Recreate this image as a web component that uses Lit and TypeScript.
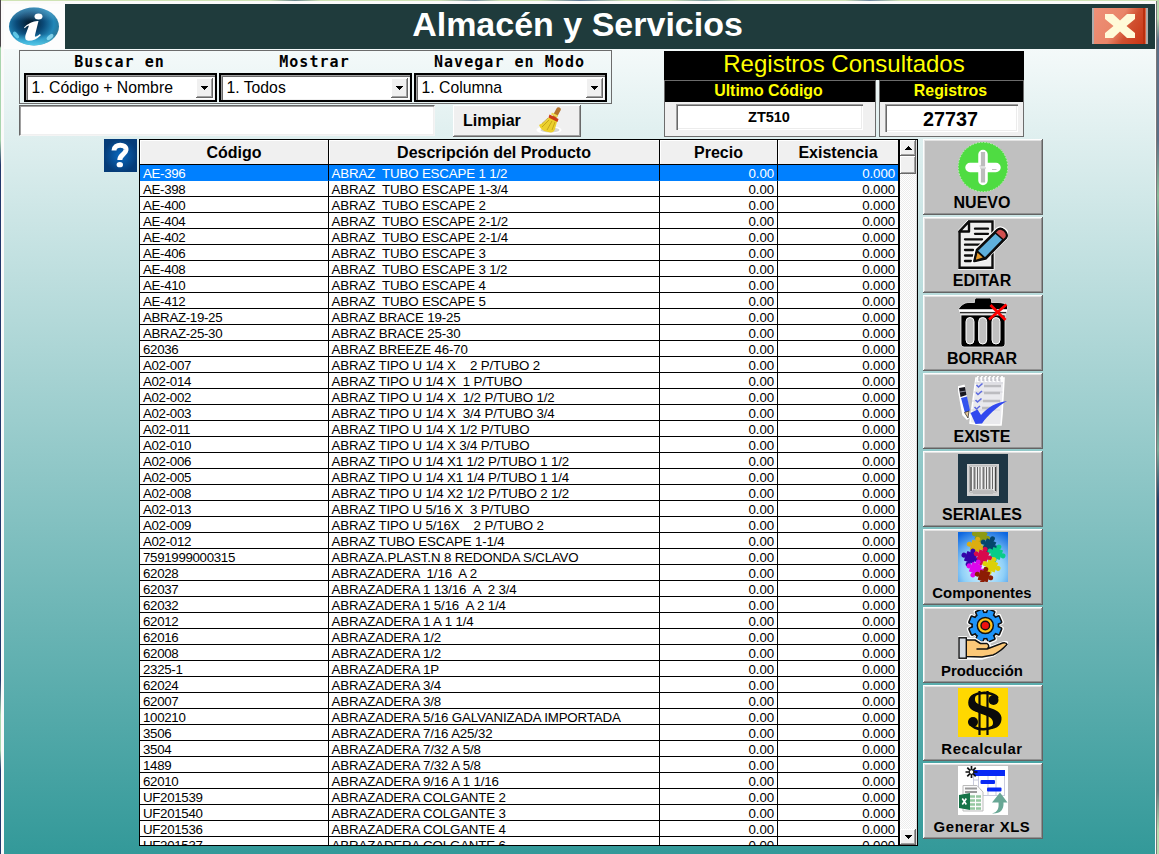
import { LitElement, html, svg, css } from "lit";
import { customElement, property } from "lit/decorators.js";

type Row = [string, string];

const ROWS: Row[] = [
  ["AE-396", "ABRAZ  TUBO ESCAPE 1 1/2"],
  ["AE-398", "ABRAZ  TUBO ESCAPE 1-3/4"],
  ["AE-400", "ABRAZ  TUBO ESCAPE 2"],
  ["AE-404", "ABRAZ  TUBO ESCAPE 2-1/2"],
  ["AE-402", "ABRAZ  TUBO ESCAPE 2-1/4"],
  ["AE-406", "ABRAZ  TUBO ESCAPE 3"],
  ["AE-408", "ABRAZ  TUBO ESCAPE 3 1/2"],
  ["AE-410", "ABRAZ  TUBO ESCAPE 4"],
  ["AE-412", "ABRAZ  TUBO ESCAPE 5"],
  ["ABRAZ-19-25", "ABRAZ BRACE 19-25"],
  ["ABRAZ-25-30", "ABRAZ BRACE 25-30"],
  ["62036", "ABRAZ BREEZE 46-70"],
  ["A02-007", "ABRAZ TIPO U 1/4 X    2 P/TUBO 2"],
  ["A02-014", "ABRAZ TIPO U 1/4 X  1 P/TUBO"],
  ["A02-002", "ABRAZ TIPO U 1/4 X  1/2 P/TUBO 1/2"],
  ["A02-003", "ABRAZ TIPO U 1/4 X  3/4 P/TUBO 3/4"],
  ["A02-011", "ABRAZ TIPO U 1/4 X 1/2 P/TUBO"],
  ["A02-010", "ABRAZ TIPO U 1/4 X 3/4 P/TUBO"],
  ["A02-006", "ABRAZ TIPO U 1/4 X1 1/2 P/TUBO 1 1/2"],
  ["A02-005", "ABRAZ TIPO U 1/4 X1 1/4 P/TUBO 1 1/4"],
  ["A02-008", "ABRAZ TIPO U 1/4 X2 1/2 P/TUBO 2 1/2"],
  ["A02-013", "ABRAZ TIPO U 5/16 X  3 P/TUBO"],
  ["A02-009", "ABRAZ TIPO U 5/16X    2 P/TUBO 2"],
  ["A02-012", "ABRAZ TUBO ESCAPE 1-1/4"],
  ["7591999000315", "ABRAZA.PLAST.N 8 REDONDA S/CLAVO"],
  ["62028", "ABRAZADERA  1/16  A 2"],
  ["62037", "ABRAZADERA 1 13/16  A  2 3/4"],
  ["62032", "ABRAZADERA 1 5/16  A 2 1/4"],
  ["62012", "ABRAZADERA 1 A 1 1/4"],
  ["62016", "ABRAZADERA 1/2"],
  ["62008", "ABRAZADERA 1/2"],
  ["2325-1", "ABRAZADERA 1P"],
  ["62024", "ABRAZADERA 3/4"],
  ["62007", "ABRAZADERA 3/8"],
  ["100210", "ABRAZADERA 5/16 GALVANIZADA IMPORTADA"],
  ["3506", "ABRAZADERA 7/16 A25/32"],
  ["3504", "ABRAZADERA 7/32 A 5/8"],
  ["1489", "ABRAZADERA 7/32 A 5/8"],
  ["62010", "ABRAZADERA 9/16 A 1 1/16"],
  ["UF201539", "ABRAZADERA COLGANTE 2"],
  ["UF201540", "ABRAZADERA COLGANTE 3"],
  ["UF201536", "ABRAZADERA COLGANTE 4"],
  ["UF201537", "ABRAZADERA COLGANTE 6"],
];

const puzzle = (x: number, y: number, c: string, r: number) => svg`
  <g transform="translate(${x} ${y}) rotate(${r}) scale(1.12)" fill=${c}>
    <rect x="-4.6" y="-4.6" width="9.2" height="9.2"/>
    <circle cx="0" cy="-6.2" r="2.2"/><circle cx="0" cy="6.2" r="2.2"/>
    <circle cx="-6.2" cy="0" r="2.2"/><circle cx="6.2" cy="0" r="2.2"/>
  </g>`;

const ICONS: Record<string, unknown> = {
  nuevo: svg`
    <circle cx="25" cy="25" r="25" fill="#4fdc42"/>
    <circle cx="25" cy="25" r="24.7" fill="none" stroke="#dff5dc" stroke-width=".8" stroke-dasharray="1.5 1.5"/>
    <path d="M25 12.500v26M12 25.500h26" stroke="#fff" stroke-width="9.500" stroke-linecap="round"/>
    <path d="M25 10v14.500M25 26.500v14" stroke="#bcbcbc" stroke-width="4.200"/>
    <path d="M23 24h-1.500M22 26h6M34 27.500h4.500" stroke="#c0c0c0" stroke-width="1"/>`,
  editar: svg`
    <path d="M11 .8H35V48.200H.900V11.500Z" fill="#fff" stroke="#fff" stroke-width="3"/>
    <path d="M11 1.500H34.500V47.700H1.500V11.500Z" fill="#f0f0f0" stroke="#0c0c0c" stroke-width="2.400"/>
    <path d="M11 1.500V11.500H1.500Z" fill="#f0f0f0" stroke="#0c0c0c" stroke-width="2.400" stroke-linejoin="round"/>
    <path d="M17 8.700H30M17 13.800H30M7 19.300H24M7 24.700H22M7 30H15M7 35.500H15M7 41H13" stroke="#0c0c0c" stroke-width="2.300" stroke-linecap="round"/>
    <path d="M15.800 41.200l2.500-11L39.500 9.500c4-4 12 3 8.500 8L27 38.800Z" fill="#fff" stroke="#fff" stroke-width="4"/>
    <path d="M16.500 41l2.500-11L39.500 10c4-3.500 11 3 8.500 7.500L27.500 38.500Z" fill="#5fb0dc" stroke="#0c0c0c" stroke-width="2.600" stroke-linejoin="round"/>
    <path d="M39.500 10c4-3.500 11 3 8.500 7.500l-2.500 2.500-8.500-7.500Z" fill="#d05050" stroke="#0c0c0c" stroke-width="1.600"/>
    <path d="M16.500 41l2.500-10 7.500 6.800Z" fill="#e59a2c" stroke="#0c0c0c" stroke-width="1.800"/>`,
  borrar: svg`
    <path d="M3 17H47V46Q47 49 44 49H6Q3 49 3 46Z" fill="#000" stroke="#e8e8e8" stroke-width=".8"/>
    <path d="M0 11.500C3 7.500 6 4.500 11 4.500H16.500V2Q16.500 0 18.500 0H31.500Q33.500 0 33.500 2V4.500H40C44 4.500 47 5.500 49.500 7.500V11.500Z" fill="#000" stroke="#e8e8e8" stroke-width=".8"/>
    <path d="M1 12.800H49" stroke="#fff" stroke-width="1.800"/><path d="M2 14.800H48" stroke="#000" stroke-width="1.200"/>
    <path d="M2 16H48" stroke="#fff" stroke-width="1.200"/>
    <g fill="#c0c0c0" stroke="#fff" stroke-width="1"><rect x="8" y="19.500" width="8" height="26.500" rx="4"/><rect x="20.700" y="19.500" width="8" height="26.500" rx="4"/><rect x="34" y="19.500" width="8" height="26.500" rx="4"/></g>
    <path d="M32.500 7L47.500 22M48.500 6.500L31 21.500" stroke="#f00" stroke-width="2.800" fill="none"/>`,
  existe: svg`
    <path d="M18 2H46L44 38 43 49H24L12 47Z" fill="#e9e9ed" stroke="#fff" stroke-width="1.600"/>
    <path d="M17 7h28M15.500 16h29M14 25h29M13 34h29" stroke="#cfcfd8" stroke-width=".8"/>
    <path d="M20 0v6M24 0v6M28 0v6M32 0v6M36 0v6M40 0v6M44 0v6" stroke="#fff" stroke-width="1.800"/>
    <path d="M21 1v4M25 1v4M29 1v4M33 1v4M37 1v4M41 1v4" stroke="#9a9aa5" stroke-width=".9"/>
    <path d="M26 10h17M26 17h16M25 25h17M24 32h12" stroke="#bcbcc0" stroke-width="2.500"/>
    <path d="M18.500 9l2 2 4-3.500M18 16.500l2 2 4-3.500M17.500 24l2 2 4-3.500M16.500 31l2 2 3.500-3" fill="none" stroke="#5d6be0" stroke-width="1.600"/>
    <path d="M0 11L6 9.500 12 41 9 43 5 39Z" fill="#fff" stroke="#fff" stroke-width="1.500"/>
    <path d="M1 12l6-1 1.500 8-6 2Z" fill="#181820"/><path d="M2 16l6-1" stroke="#889" stroke-width="1"/>
    <path d="M3 22l6-1.500 3 14-5 2.500Z" fill="#3454ee"/><path d="M6.500 36.500l4.500-1.500-1 7Z" fill="#e8c89a" stroke="#222" stroke-width=".7"/>
    <path d="M12.500 37l7-3.500 3.500 5.500C30 31 38 26.500 49 25 39 31 30 39 24 47.500L17.500 48Z" fill="#3148ef"/>`,
  seriales: svg`
    <rect width="50" height="49" fill="#1e3644"/><rect x="9" y="10" width="32" height="32" fill="#d2d2d2"/>
    <path d="M11.500 12H38.500V38H35V36H15V38H11.500Z" fill="#f4f4f4" stroke="#aaa" stroke-width="1"/>
    <path d="M13 13V37M37.500 13V37" stroke="#444" stroke-width="1.400"/>
    <path d="M16.500 13V35M25.500 13V35M31.500 13V35" stroke="#777" stroke-width="2"/>
    <path d="M19.500 13V35M22 13V35M28.500 13V35M34.500 13V35" stroke="#666" stroke-width="1.100"/>
    <path d="M15 38.500H35" stroke="#bbb" stroke-width="3"/>`,
  componentes: svg`
    <defs><radialGradient id="sky" cx=".5" cy=".75" r=".85"><stop offset="0" stop-color="#eafaff"/><stop offset=".5" stop-color="#8fd0f8"/><stop offset="1" stop-color="#0c66e0"/></radialGradient></defs>
    <rect width="50" height="50" fill="url(#sky)"/>
    ${puzzle(23, 4, "#8c9a14", 20)}${puzzle(18, 14, "#dcae10", 15)}${puzzle(31.5, 13, "#04466c", 25)}
    ${puzzle(12.5, 25.5, "#3404a8", 20)}${puzzle(38.5, 21.5, "#08cc88", 20)}${puzzle(25, 24, "#d8084c", 18)}
    ${puzzle(17.5, 36.5, "#dc08ec", 22)}${puzzle(33.5, 34, "#dcd008", 20)}${puzzle(26, 44, "#8c1c04", 15)}`,
  produccion: svg`
    <g transform="translate(27.300 15.500)">
      <g fill="#fff">${[0, 45, 90, 135].map((a) => svg`<rect x="-5.500" y="-18.500" width="11" height="37" rx="2" transform="rotate(${a + 22})"/>`)}</g>
      <circle r="14" fill="#111"/>
      <g fill="#1e94f8" stroke="#111" stroke-width="1.600">${[0, 45, 90, 135].map((a) => svg`<rect x="-3.800" y="-16.500" width="7.600" height="33" rx="1" transform="rotate(${a + 22})"/>`)}</g>
      <circle r="12.400" fill="#1e94f8"/><circle r="8" fill="#ffc21c" stroke="#111" stroke-width="1.500"/><circle r="4.300" fill="#f01010" stroke="#111" stroke-width="1.400"/>
    </g>
    <path d="M8 29H17L23 32.500H30Q33 35 30 38L44 33Q49 31 49.500 34L36 45 24 48.500H1V27.500H8Z" fill="#fff" stroke="#fff" stroke-width="2.500"/>
    <path d="M8 30H17L22.500 33.500H29Q32.500 36 29 39H19 29L42 34Q48 31.500 49 34.500 42 42 35 45L24 47 8 46.500Z" fill="#fcc878" stroke="#111" stroke-width="1.500" stroke-linejoin="round"/>
    <rect x="1" y="27.800" width="7.300" height="20.400" fill="#d4dbe4" stroke="#111" stroke-width="1.400"/>`,
  recalcular: svg`
    <rect width="50" height="49" fill="#ffd800"/>
    <path d="M21.500 3V47M29.500 3V47" stroke="#0a0a0a" stroke-width="2.200"/>
    <circle cx="35.500" cy="12" r="5" fill="#0a0a0a"/><circle cx="15" cy="34" r="5" fill="#0a0a0a"/>
    <path d="M39.500 10C37 3.500 12 1.500 11.500 14.500 11 27.500 38 21 38.500 33 38.500 43 14 45 11.500 33" fill="none" stroke="#0a0a0a" stroke-width="2.600"/>
    <path d="M11.200 12C9 26 30 25 34 31.500 36 35 35 38 31 41.500 40 41 44 36 43.500 29.500 42.500 18.500 21 20 17.500 13.500 16 10 18 7 20 5.500 15 6 12 8 11.200 12Z" fill="#0a0a0a"/>`,
  xls: svg`
    <rect width="50" height="49" fill="#fff"/><path d="M15.500 9V29M20.500 9V30M30 9V30M38 9V30M46.500 9V30M15 29.500H47M15 14H20" stroke="#c9cbdc" stroke-width="1"/>
    <rect x="16" y="4" width="31" height="6" fill="#0829f5"/><rect x="22.500" y="14" width="14.500" height="4" rx="1" fill="#0829f5"/><rect x="29" y="21.500" width="14.500" height="4" rx="1" fill="#0829f5"/>
    <path d="M13.500 0V12M7.500 6H19.500M9.300 1.700L17.700 10.300M17.700 1.700L9.300 10.300" stroke="#111" stroke-width="1.700"/><circle cx="13.500" cy="6" r="2.300" fill="#fff" stroke="#111" stroke-width="1"/>
    <path d="M5 19.500H19L25 26V45H5Z" fill="#fafafa" stroke="#bbb" stroke-width="1"/>
    <path d="M7 22.500h12M7 26h12" stroke="#999" stroke-width="2"/><path d="M12 30.500h11M12 34.500h11M12 38.500h11M12 42.500h11" stroke="#95c8a0" stroke-width="2.600"/><path d="M17.500 29V44" stroke="#fff" stroke-width="1"/>
    <path d="M1 29L12 27V44L1 42Z" fill="#157347"/><path d="M4.300 32.500L8.300 38.500M8.300 32.500L4.300 38.500" stroke="#fff" stroke-width="1.600"/>
    <path d="M34 47.500C40 46 41 42 40.500 36.500H34L42 26.500 49.500 36.500H45.500C46 44 42 48 34 47.500Z" fill="#68a795"/>`,
};

@customElement("action-button")
class ActionButton extends LitElement {
  @property() label = "";
  @property() icon = "";
  @property({ type: Boolean }) spaced = false;
  static styles = css`
    :host { display: block; }
    .btn {
      width: 120px; height: 76px; box-sizing: border-box; padding: 3px 1px 0 0;
      border: 0; background: #c0c0c0; display: flex; flex-direction: column; align-items: center;
      box-shadow: inset -1px -1px #636363, inset 1px 1px #fdfdfd, inset -2px -2px #929292, inset 2px 2px #e2e2e2;
      font: bold 16px/18px "Liberation Sans", Arial, sans-serif; color: #000;
    }
    .small { font-size: 14.9px; }
    .spaced { letter-spacing: 0.6px; }
    .label { margin: 1.5px 1px 0 0; white-space: nowrap; }
    svg { display: block; width: 50px; height: 50px; flex: none; overflow: hidden; }
  `;
  render() {
    const small = this.label !== this.label.toUpperCase();
    return html`<button class="btn ${small ? "small" : ""} ${this.spaced ? "spaced" : ""}">
      <svg viewBox="0 0 50 50">${ICONS[this.icon]}</svg>
      <span class="label">${this.label}</span>
    </button>`;
  }
}

@customElement("combo-box")
class ComboBox extends LitElement {
  @property() label = "";
  @property() value = "";
  static styles = css`
    :host { display: block; width: 193px; }
    .caption {
      height: 22px; text-align: center; white-space: nowrap; padding-right: 2px;
      font: bold 15px/22px "DejaVu Sans Mono", monospace; letter-spacing: 1.05px; color: #000;
    }
    .box {
      box-sizing: border-box; height: 29px; border: 2px solid #000; background: #fff; display: flex;
      box-shadow: inset 1px 1px #a0a0a0, inset 2px 2px #696969, inset -1px -1px #f0f0f0; padding: 3px 2px 2px 5.5px;
      align-items: stretch;
    }
    .value { flex: 1; font: 15.75px/20px "Liberation Sans", Arial, sans-serif; color: #000; white-space: nowrap; }
    .drop {
      width: 17px; height: 20px; background: #f0f0f0; display: grid; place-items: center;
      box-shadow: inset -1px -1px #696969, inset 1px 1px #fff, inset -2px -2px #a0a0a0;
    }
  `;
  render() {
    return html`<div class="caption">${this.label}</div>
      <div class="box"><span class="value">${this.value}</span>
        <span class="drop"><svg width="7" height="4" viewBox="0 0 7 4" shape-rendering="crispEdges"><path d="M0 0H7L3.500 4Z"/></svg></span>
      </div>`;
  }
}

@customElement("app-root")
class AppRoot extends LitElement {
  static styles = css`
    :host { display: block; font-family: "Liberation Sans", Arial, sans-serif; color: #000; }
    .desktop {
      box-sizing: border-box; width: 1159px; height: 854px; overflow: hidden; padding: 1px 3px 0 1px;
      background:
        linear-gradient(to bottom, #4a4448 46px, #a9d5ae 48px, #a9d5ae 140px, #22386c 165px, #22386c 680px, #a9d5ae 715px, #a9d5ae 750px, #22386c 770px) left / 1px 100% no-repeat,
        linear-gradient(to bottom, #b8dcae 0, #b8dcae 18px, #5c7088 40px, #5c7088 140px, #8cbc9c 195px, #5a8c8c 260px, #4c6c7c 390px, #78ac9c 450px, #22406c 500px, #223050 640px, #607880 700px, #607880 790px, #b8dcae 830px) right / 2px 100% no-repeat,
        linear-gradient(to right, #cfe3b5 0, #cfe3b5 270px, #6f8a90 295px, #cfe3b5 320px, #cfe3b5 440px, #7a92a0 475px, #cfe3b5 500px, #cfe3b5 540px, #5f7a98 580px, #cfe3b5 625px, #cfe3b5 670px, #7a9aa0 705px, #cfe3b5 740px, #cfe3b5 845px, #7088a0 870px, #cfe3b5 900px);
    }
    .window {
      box-sizing: border-box; height: 853px; border: solid #fbfafa; border-width: 3px 1px 0 3px;
      box-shadow: 1px 0 #777;
      background: linear-gradient(to bottom, #fff, #339999);
    }
    .header { display: flex; height: 45px; background: #1f3b3c; align-items: center; }
    .logo { width: 61px; height: 45px; background: #fdfdfd; flex: none; }
    .logo svg, .help svg { display: block; }
    .title { flex: 1; text-align: center; margin: 0 2px 6px 0; font-size: 34px; line-height: 40px; font-weight: bold; color: #fff; }
    .close {
      flex: none; width: 56px; height: 36px; margin: 0 7px 1px 0; box-sizing: border-box;
      display: grid; place-items: center; border: solid #acacac; border-width: 0 2px;
      background: linear-gradient(to right, transparent 49px, #b83010 49px, #b83010 51px, #dc6848 51px), linear-gradient(120deg, #ee9078 0, #e98568 45%, #d05030 65%, #c83010);
    }
    .top { display: flex; height: 90px; box-sizing: border-box; padding: 1px 0 0 15px; align-items: flex-start; }
    .filters { width: 593px; margin-right: 52px; }
    .panel { box-sizing: border-box; height: 54px; border: 1px solid #6c6c6c; display: flex; gap: 2px; padding: 0 4px; }
    .searchrow { display: flex; gap: 18px; margin-top: 1px; }
    .search {
      box-sizing: border-box; width: 416px; height: 31px; background: #fff; border: solid; border-width: 1px;
      border-color: #686868 #f4f4f4 #f4f4f4 #686868; box-shadow: inset 1px 1px #a0a0a0, inset -1px -1px #f0f0f0;
    }
    .clear {
      width: 128px; height: 32px; box-sizing: border-box; border: 0; padding: 0 19px 0 10px; background: #f0f0f0; display: flex; align-items: center; justify-content: space-between;
      box-shadow: inset -1px -1px #696969, inset 1px 1px #fff, inset -2px -2px #a0a0a0;
      font: bold 16px/18px "Liberation Sans", Arial, sans-serif; color: #000;
    }
    .stats { width: 360px; margin-top: 1px; }
    .stats-title { height: 29px; background: #000; color: #ff0; font-size: 24px; line-height: 26px; text-align: center; }
    .stats-row { display: flex; gap: 3px; }
    .stat { box-sizing: border-box; height: 57px; border: 1px solid #6c6c6c; background: #f0f0f0; }
    .wide { width: 212px; }
    .narrow { width: 145px; }
    .stat-label { height: 21px; background: #000; color: #ff0; font-weight: bold; font-size: 15.9px; line-height: 19px; text-align: center; padding-right: 3px; }
    .narrow .stat-label { padding-right: 2px; }
    .stat-value {
      box-sizing: border-box; background: #fff; text-align: center; font-weight: bold;
      box-shadow: inset 1px 1px #a0a0a0, inset 2px 2px #696969, inset -1px -1px #fff, inset -2px -2px #ececec;
    }
    .wide .stat-value { width: 187px; height: 26px; margin: 2px 0 0 11px; font-size: 14.5px; line-height: 26px; padding-right: 1px; }
    .narrow .stat-value { width: 133px; height: 28px; margin: 2px 0 0 5px; font-size: 19.8px; line-height: 30px; padding-right: 2px; }
    .main { display: flex; padding-left: 100px; align-items: flex-start; }
    .help { width: 33px; height: 33px; margin-right: 2px; flex: none; }
    .table {
      box-sizing: border-box; width: 779px; height: 707px; border: 1px solid #000; background: #fff;
      display: flex; overflow: hidden; margin-right: 5px; flex: none;
    }
    .grid { width: 760px; overflow: hidden; flex: none; box-sizing: border-box; border-right: 2px solid #000; }
    .row { display: grid; grid-template-columns: 189px 331px 118px 120px; height: 16px; }
    .cell {
      box-sizing: border-box; border-right: 1px solid #000; border-bottom: 1px solid #000; padding: 0 3px;
      font-size: 13.3px; line-height: 17px; letter-spacing: -0.32px; white-space: pre; overflow: hidden; height: 16px;
    }
    .desc { letter-spacing: -0.15px; padding-left: 2.6px; }
    .cell:last-child { border-right: 0; }
    .num { text-align: right; letter-spacing: -0.1px; padding-right: 3px; }
    .selected .cell { background: #0080ff; color: #fff; border-bottom-color: #0080ff; }
    .head { height: 25px; }
    .head .cell { height: 25px; background: #f0f0f0; font-weight: bold; font-size: 16px; line-height: 25px; letter-spacing: 0; text-align: center; box-shadow: inset 1px 1px #fff; }
    .scroll {
      flex: 1; display: flex; flex-direction: column;
      background: conic-gradient(#fff 25%, #ececec 0 50%, #fff 0 75%, #ececec 0) 0 0 / 2px 2px; border-right: 1px solid #dcdcdc;
    }
    .sb {
      height: 16px; background: #f0f0f0; display: grid; place-items: center; flex: none;
      box-shadow: inset -1px -1px #696969, inset 1px 1px #fff, inset -2px -2px #a0a0a0;
    }
    .thumb { height: 18px; }
    .track { flex: 1; }
    .actions { display: flex; flex-direction: column; gap: 2px; }
  `;

  render() {
    return html`<div class="desktop"><div class="window">
      <div class="header">
        <div class="logo"><svg width="61" height="45" viewBox="0 0 61 45">
          <defs>
            <radialGradient id="orb" cx=".42" cy=".42" r=".6"><stop offset="0" stop-color="#031828"/><stop offset=".45" stop-color="#0a4a78"/><stop offset=".8" stop-color="#2287b8"/><stop offset="1" stop-color="#2c7898"/></radialGradient>
            <linearGradient id="glow" x1="0" y1="0" x2="0" y2="1"><stop offset="0" stop-color="#78b8d8" stop-opacity=".35"/><stop offset=".35" stop-color="#fff" stop-opacity="0"/><stop offset=".7" stop-color="#50d0f0" stop-opacity="0"/><stop offset="1" stop-color="#60e0ff" stop-opacity=".8"/></linearGradient>
          </defs>
          <ellipse cx="30" cy="22.500" rx="25" ry="19" fill="url(#orb)"/><ellipse cx="30" cy="22.500" rx="25" ry="19" fill="url(#glow)"/>
          <ellipse cx="12" cy="31" rx="4" ry="2" fill="#7ce6ff" opacity=".7" transform="rotate(50 12 31)"/><ellipse cx="46" cy="33" rx="4" ry="2" fill="#a4ecff" opacity=".7" transform="rotate(-40 46 33)"/>
          <ellipse cx="34.500" cy="12.500" rx="4" ry="3" fill="#fff"/>
          <path d="M20 23.500Q27 16.500 34.500 17L31 31Q30 35 36 30L36.800 31.200Q31 37 24.500 36.800 20 36.500 21.500 31L25 21.500Q23 21.500 20.700 24.300Z" fill="#fff"/>
        </svg></div>
        <div class="title">Almacén y Servicios</div>
        <div class="close"><svg width="32" height="26" viewBox="0 0 32 26"><path d="M1 1H9L16 7.500 23 1H31V6L22.500 13 31 20V25H23L16 18.500 9 25H1V20L9.500 13 1 6Z" fill="#fffad8"/></svg></div>
      </div>

      <div class="top">
        <div class="filters">
          <div class="panel">
            <combo-box label="Buscar en" value="1. Código + Nombre"></combo-box>
            <combo-box label="Mostrar" value="1. Todos"></combo-box>
            <combo-box label="Navegar en Modo" value="1. Columna"></combo-box>
          </div>
          <div class="searchrow">
            <div class="search"></div>
            <button class="clear">Limpiar
              <svg width="26" height="28" viewBox="0 0 26 28">
                <ellipse cx="13" cy="23" rx="12.500" ry="4" fill="#fff"/><ellipse cx="14" cy="23" rx="9.500" ry="2.500" fill="#d4d4d4"/>
                <path d="M19 9L22.500 2.500" stroke="#b5742c" stroke-width="4.500" stroke-linecap="round"/>
                <path d="M13.500 9.500Q10 15 3 18 5 24 12 25 18 26.500 19 22L21.500 13Z" fill="#ecd02c"/>
                <path d="M13 13L6 20M16 14L11 23M19 15L16 23M12 11L6 16.500" stroke="#b49410" stroke-width=".7"/>
                <path d="M13.500 7.500L22.500 12 21.500 15 12.500 10.500Z" fill="#cc3a18"/><path d="M15.500 6.500L21.500 9.500" stroke="#efd850" stroke-width="2"/>
              </svg>
            </button>
          </div>
        </div>
        <div class="stats">
          <div class="stats-title">Registros Consultados</div>
          <div class="stats-row">
            <div class="stat wide"><div class="stat-label">Ultimo Código</div><div class="stat-value">ZT510</div></div>
            <div class="stat narrow"><div class="stat-label">Registros</div><div class="stat-value">27737</div></div>
          </div>
        </div>
      </div>

      <div class="main">
        <div class="help"><svg width="33" height="33" viewBox="0 0 33 33">
          <defs><radialGradient id="hq"><stop offset="0" stop-color="#0a6ac0"/><stop offset="1" stop-color="#053c78"/></radialGradient></defs>
          <rect width="33" height="33" fill="url(#hq)"/>
          <path d="M10 11.500C10 4.500 22.500 4.500 22 11 21.500 15.500 15.800 15.500 15.800 21" fill="none" stroke="#fff" stroke-width="5"/><ellipse cx="15.800" cy="25.700" rx="3.200" ry="2.600" fill="#fff"/>
        </svg></div>
        <div class="table">
          <div class="grid">
            <div class="row head"><div class="cell">Código</div><div class="cell">Descripción del Producto</div><div class="cell">Precio</div><div class="cell">Existencia</div></div>
            ${ROWS.map(([code, name], i) => html`<div class="row ${i === 0 ? "selected" : ""}"><div class="cell">${code}</div><div class="cell desc">${name}</div><div class="cell num">0.00</div><div class="cell num">0.000</div></div>`)}
          </div>
          <div class="scroll">
            <div class="sb"><svg width="7" height="4" viewBox="0 0 7 4" shape-rendering="crispEdges"><path d="M0 4H7L3.500 0Z"/></svg></div>
            <div class="sb thumb"></div>
            <div class="track"></div>
            <div class="sb"><svg width="7" height="4" viewBox="0 0 7 4" shape-rendering="crispEdges"><path d="M0 0H7L3.500 4Z"/></svg></div>
          </div>
        </div>
        <div class="actions">
          <action-button icon="nuevo" label="NUEVO"></action-button>
          <action-button icon="editar" label="EDITAR"></action-button>
          <action-button icon="borrar" label="BORRAR"></action-button>
          <action-button icon="existe" label="EXISTE"></action-button>
          <action-button icon="seriales" label="SERIALES"></action-button>
          <action-button icon="componentes" label="Componentes"></action-button>
          <action-button icon="produccion" label="Producción"></action-button>
          <action-button icon="recalcular" label="Recalcular" spaced></action-button>
          <action-button icon="xls" label="Generar XLS" spaced></action-button>
        </div>
      </div>
    </div></div>`;
  }
}
